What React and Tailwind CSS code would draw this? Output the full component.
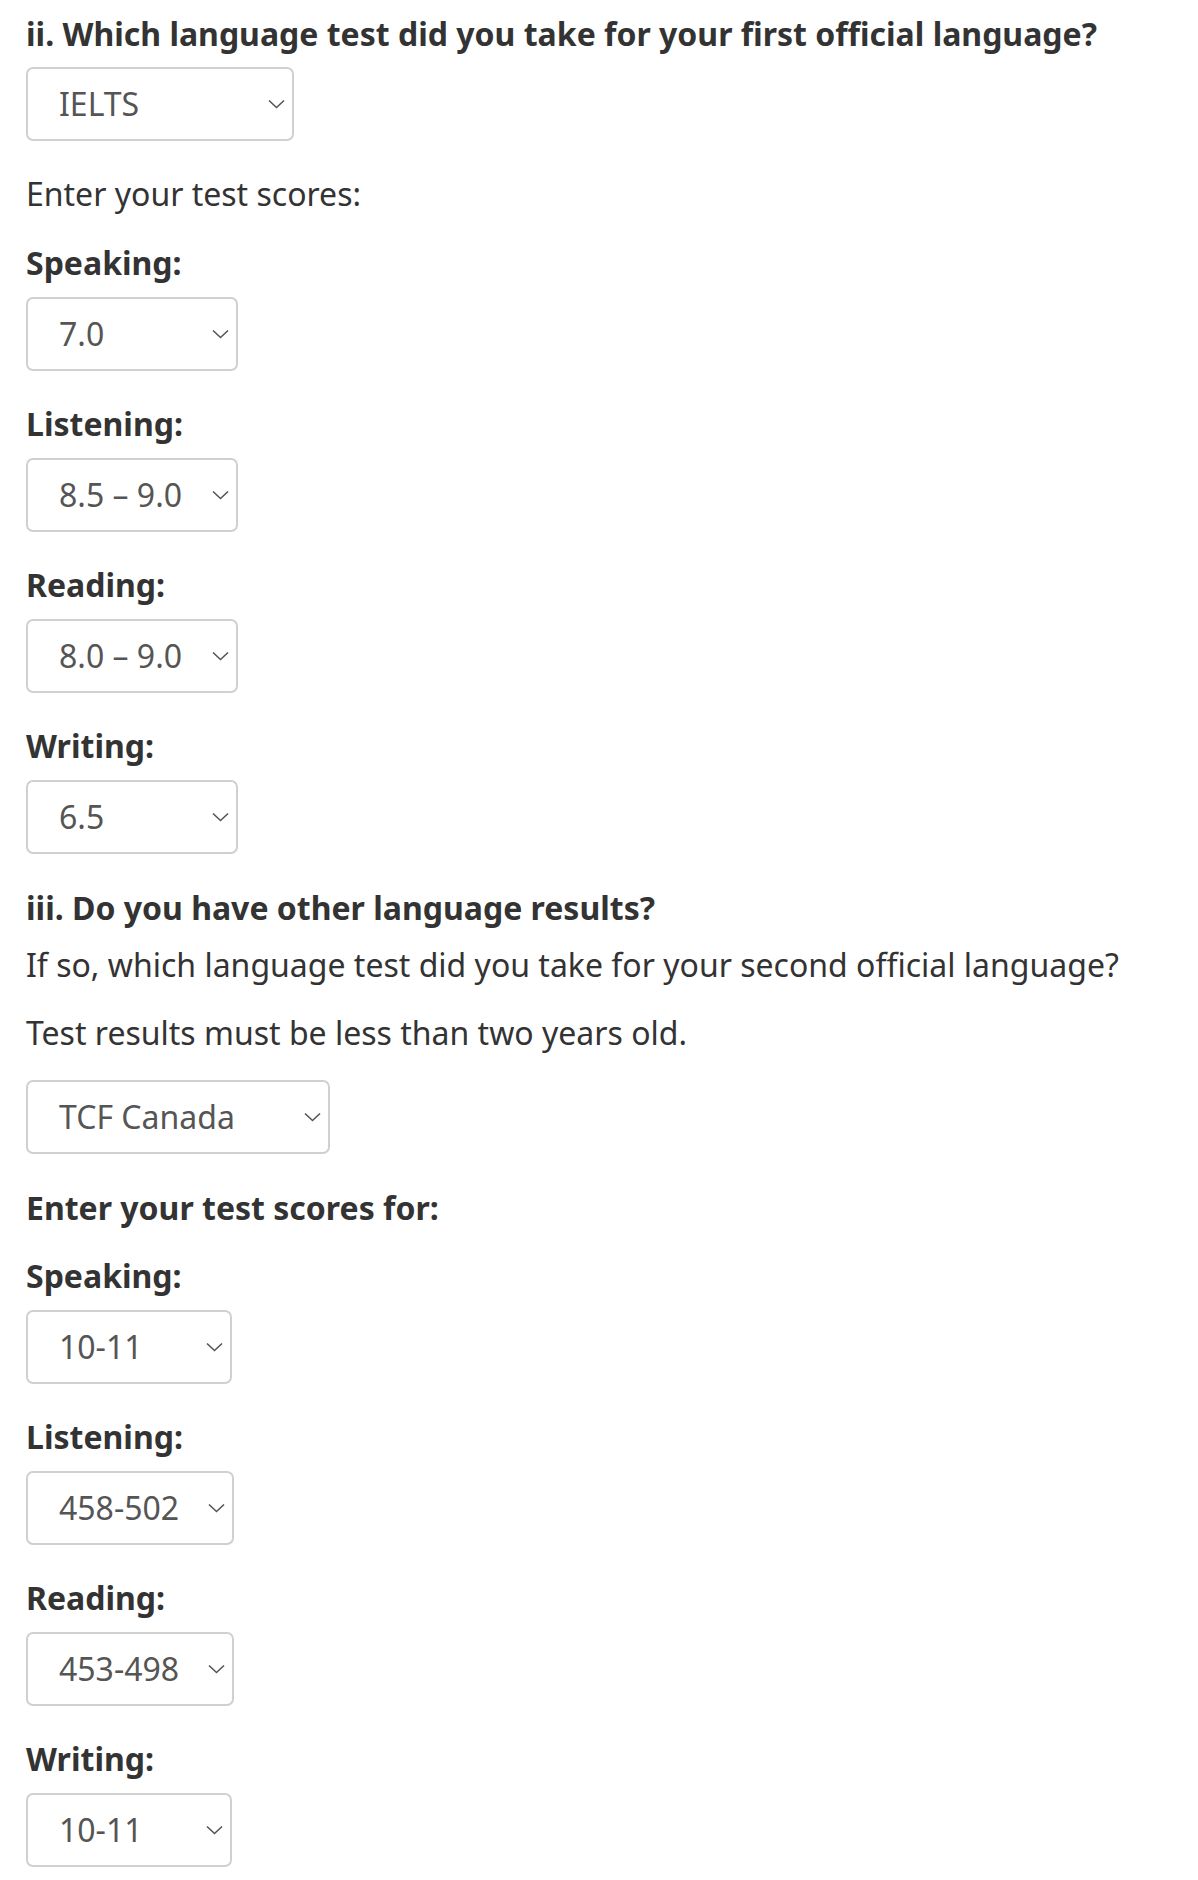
import React from "react";

function Chevron() {
  return (
    <svg width="17" height="10" viewBox="0 0 17 10" fill="none" className="shrink-0">
      <path d="M1 1.5 L8.5 8.5 L16 1.5" stroke="#555" strokeWidth="1.6" />
    </svg>
  );
}

function Select({ value, width, mt = "mt-[12px]" }) {
  return (
    <div
      className={`${mt} ${width} h-[74px] flex items-center justify-between pl-[31px] pr-[7px] border-2 border-[#d0d0d0] rounded-[7px] bg-white text-[#555]`}
    >
      <span>{value}</span>
      <Chevron />
    </div>
  );
}

function Label({ children, mt = "mt-[31px]" }) {
  return <p className={`${mt} font-bold`}>{children}</p>;
}

export default function App() {
  return (
    <div
      className="bg-white min-h-[1880px] px-[26px] pt-[12px] text-[32px] leading-[44px] text-[#333]"
      style={{ fontFamily: '"Noto Sans", "Open Sans", sans-serif' }}
    >
      <h2 className="font-bold">ii. Which language test did you take for your first official language?</h2>
      <Select value="IELTS" width="w-[268px]" mt="mt-[11px]" />
      <p className="mt-[31px]">Enter your test scores:</p>

      <Label mt="mt-[25px]">Speaking:</Label>
      <Select value="7.0" width="w-[212px]" />
      <Label>Listening:</Label>
      <Select value="8.5 – 9.0" width="w-[212px]" />
      <Label>Reading:</Label>
      <Select value="8.0 – 9.0" width="w-[212px]" />
      <Label>Writing:</Label>
      <Select value="6.5" width="w-[212px]" />

      <h2 className="mt-[32px] font-bold">iii. Do you have other language results?</h2>
      <p className="mt-[13px]">If so, which language test did you take for your second official language?</p>
      <p className="mt-[24px]">Test results must be less than two years old.</p>
      <Select value="TCF Canada" width="w-[304px]" mt="mt-[25px]" />

      <p className="mt-[32px] font-bold">Enter your test scores for:</p>

      <Label mt="mt-[24px]">Speaking:</Label>
      <Select value="10-11" width="w-[206px]" />
      <Label>Listening:</Label>
      <Select value="458-502" width="w-[208px]" />
      <Label>Reading:</Label>
      <Select value="453-498" width="w-[208px]" />
      <Label>Writing:</Label>
      <Select value="10-11" width="w-[206px]" />
    </div>
  );
}
